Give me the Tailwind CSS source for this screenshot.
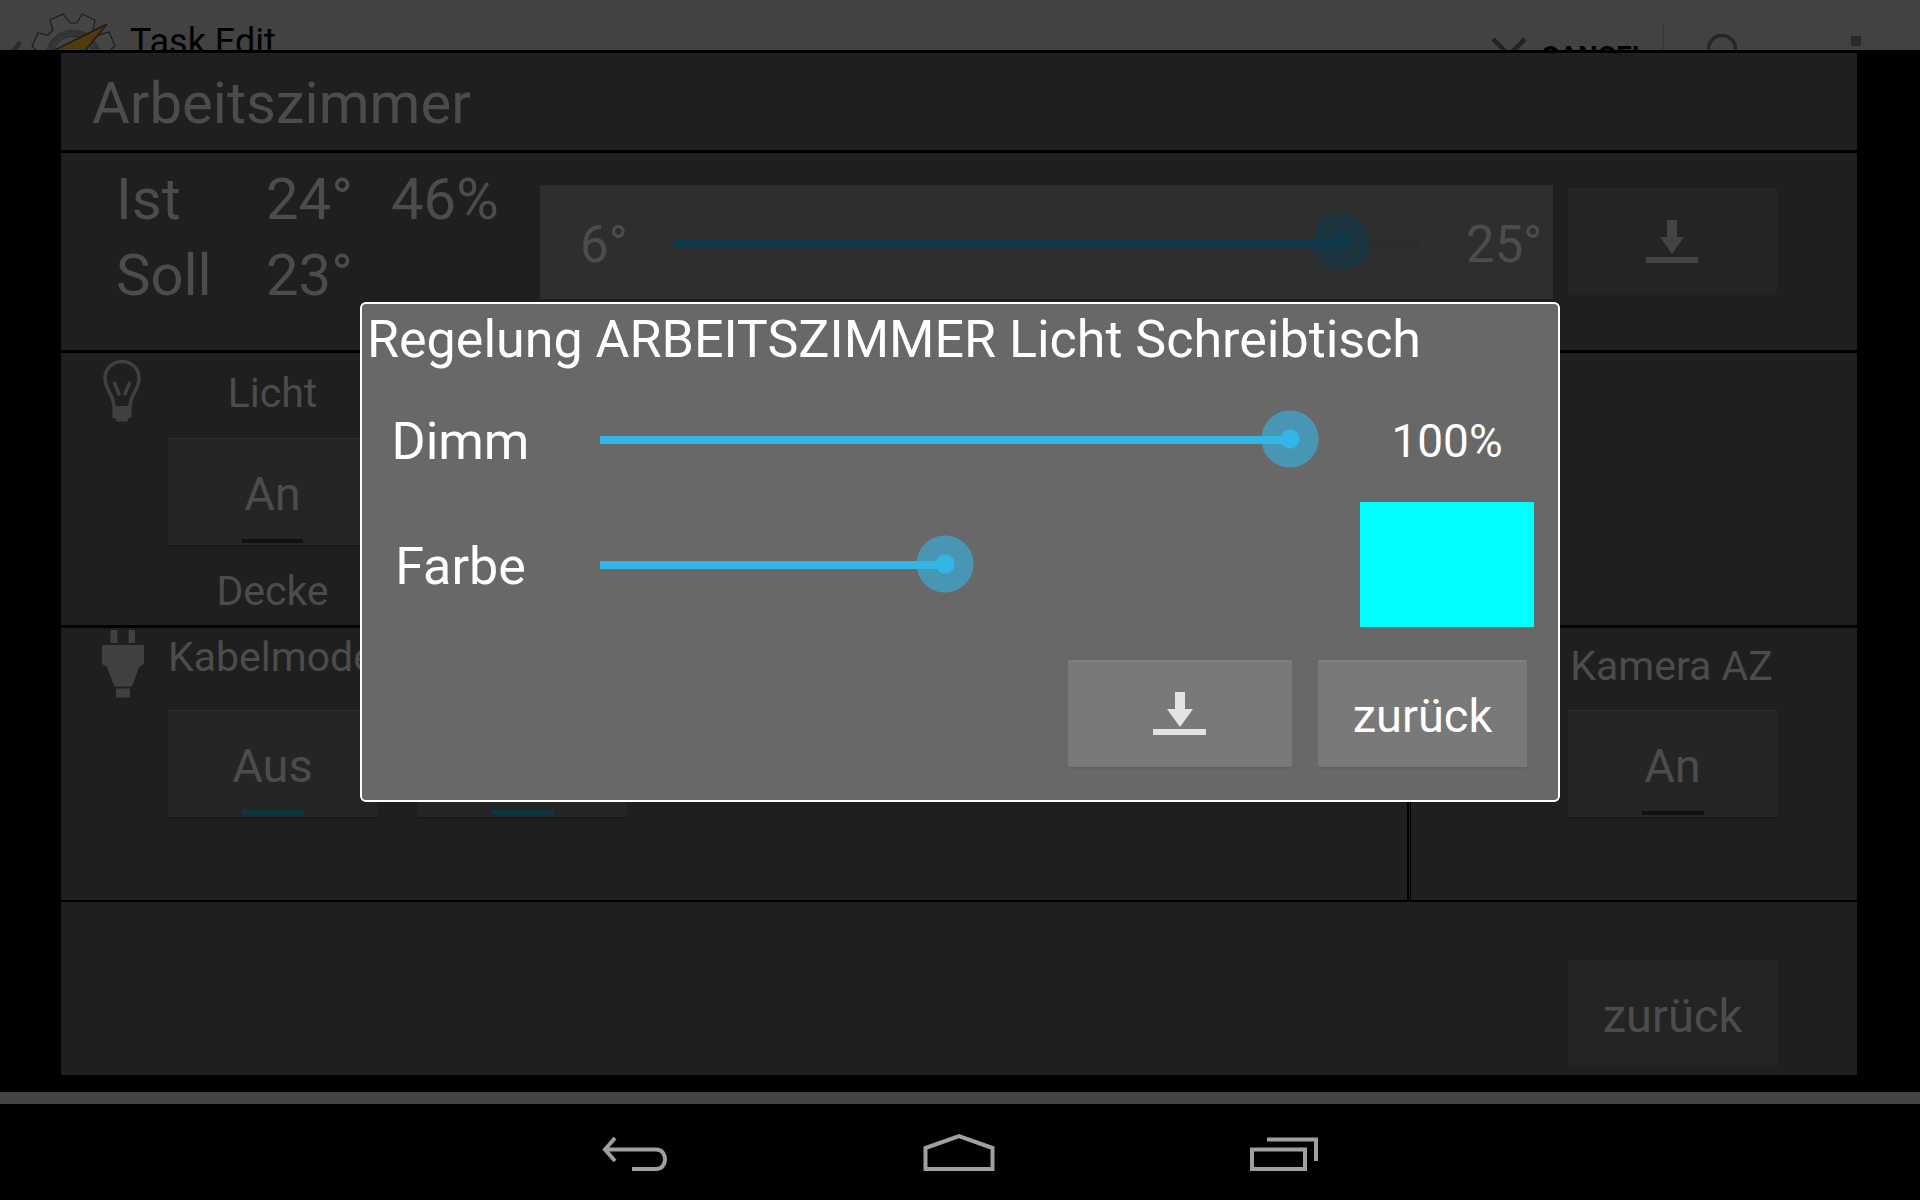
<!DOCTYPE html>
<html lang="de">
<head>
<meta charset="utf-8">
<title>Arbeitszimmer</title>
<script src="https://cdn.jsdelivr.net/npm/@tailwindcss/browser@4"></script>
</head>
<body class="bg-black font-['Roboto','Liberation_Sans',sans-serif] text-[#4c4c4c]">
<div class="relative">

  <!-- Action bar of the app underneath, cut off by the scene -->
  <header class="flex h-[50px] items-start overflow-hidden bg-[#424242] text-black">
    <svg class="h-[50px] w-[130px] shrink-0" viewBox="0 0 130 50" fill="none" aria-hidden="true">
      <path d="M20 42 11 55" stroke="#2c2c2c" stroke-width="5"/>
      <path d="M38 52 32 46 38 33 48 35 53 30 50 20 63 14 70 23H77L82 14 95 20 93 30 99 35 109 32 115 46 108 52Z" fill="#454545" stroke="#1c1c1c" stroke-width="1.2"/>
      <circle cx="73" cy="57" r="25" fill="#434343" stroke="#333" stroke-width="5"/>
      <circle cx="73" cy="57" r="21" stroke="#1c1c1c" stroke-width="1"/>
      <path d="M53 51 107 24 84 52Z" fill="#513a10" stroke="#241b0b" stroke-width="1.5"/>
    </svg>
    <span class="pt-5 text-[36px] leading-[44px] whitespace-nowrap">Task Edit</span>
    <div class="ml-auto flex items-start">
      <button type="button" class="flex items-start text-[28px] font-bold">
        <svg class="mr-[14px] h-[50px] w-[36px]" viewBox="0 0 36 50" fill="none" aria-hidden="true"><path d="M2 39 34 71M34 39 2 71" stroke="#222" stroke-width="4.5"/></svg>
        <span class="pt-[41px] leading-8">CANCEL</span>
      </button>
      <span class="mt-6 ml-[15px] h-[26px] w-[2px] bg-[#393939]"></span>
      <button type="button" aria-label="Suchen" class="ml-[43px]"><svg class="h-[50px] w-[32px]" viewBox="0 0 32 50" fill="none" aria-hidden="true"><circle cx="15" cy="49" r="13.5" stroke="#262626" stroke-width="3.5"/></svg></button>
      <button type="button" aria-label="Mehr" class="mt-9 mr-[59px] ml-[112px] h-[10px] w-[10px] bg-[#2a2a2a]"></button>
    </div>
  </header>

  <!-- Dimmed room scene -->
  <main class="mt-[3px] mr-[63px] mb-[17px] ml-[61px] flex flex-col gap-[3px]">
    <h1 class="bg-[#1f1f1f] pt-1 pl-[31px] text-[58px] leading-[93px]">Arbeitszimmer</h1>

    <section class="flex min-h-[197px] items-start bg-[#1f1f1f] pr-20 pl-[55px]">
      <div class="grid grid-cols-[150px_125px_149px] pt-2 text-[58px] leading-[76px]">
        <span>Ist</span><span>24°</span><span>46%</span>
        <span>Soll</span><span>23°</span>
      </div>
      <div class="mt-8 flex h-[114px] flex-1 items-center bg-[#2e2e2e] pl-10 text-[51px]">
        <label for="temp" class="w-[65px] pt-[6px]">6°</label>
        <input id="temp" type="range" min="6" max="25" value="23" class="h-[58px] min-w-0 flex-1 appearance-none bg-[length:100%_8px] bg-[position:0_26px] bg-no-repeat [&::-webkit-slider-thumb]:h-[58px] [&::-webkit-slider-thumb]:w-[58px] [&::-webkit-slider-thumb]:appearance-none [&::-webkit-slider-thumb]:bg-[radial-gradient(circle,#0f394a_9px,#0f394a99_10px,#0f394a99_28px,transparent_29px)]" style="background-image:linear-gradient(to right,transparent 29px,#0f394a 29px,#0f394a calc(29px + (100% - 58px) * .895),#2c2c2c 0,#2c2c2c calc(100% - 29px),transparent 0)">
        <span class="w-[104px] pt-[6px] pl-[17px]">25°</span>
      </div>
      <button type="button" aria-label="Übernehmen" class="mt-[35px] ml-[15px] flex h-[107px] w-[209px] items-center justify-center rounded-xs border-t-2 border-[#262626] bg-[#242424] pb-[2px]">
        <svg class="h-[48px] w-[56px]" viewBox="0 0 56 48" fill="#444" aria-hidden="true"><path d="M22 2H32V19H39L27 36 15 19H22ZM1 39H53V45H1Z"/></svg>
      </button>
    </section>

    <section class="flex min-h-[272px] items-start bg-[#1f1f1f] pl-[42px]">
      <svg class="mt-[7px] h-[62px] w-[38px]" viewBox="0 0 38 62" fill="none" stroke="#404040" stroke-width="3.500" stroke-linecap="round" aria-hidden="true">
        <path d="M11 46C10 33 2 30 2 18A17 16.500 0 0 1 36 18C36 30 28 33 27 46"/>
        <path d="M11.500 23 16 34M26.500 23 22 34"/>
        <path d="M9.500 46H28.500V58H26L24 61.500H14L12 58H9.500Z" fill="#404040" stroke="none"/>
      </svg>
      <div class="ml-[27px] w-[209px] text-center text-[41px]">
        <div class="pb-1 leading-[81px]">Licht</div>
        <button type="button" class="relative flex h-[109px] w-full items-center justify-center rounded-xs border-t border-b-2 border-t-[#2d2d2d] border-b-[#181818] bg-[#252525] pt-1 text-[47px]">An<span class="absolute bottom-[2px] h-1 w-[61px] bg-[#111]"></span></button>
        <div class="pt-[10px] leading-[68px]">Decke</div>
      </div>
    </section>

    <div class="-mb-px flex min-h-[272px]">
      <section class="flex flex-1 items-start bg-[#1f1f1f] pl-[41px]">
        <svg class="mt-[2px] h-[68px] w-[42px]" viewBox="0 0 42 68" fill="#404040" aria-hidden="true">
          <path d="M8.500 0H15.500V13H8.500ZM26.500 0H33V13H26.500ZM0 15H42V34L37 37 30 56.500H12.500L5 37 0 34ZM14 58.500H28V67.500H14Z"/>
        </svg>
        <div class="ml-6 w-[209px] text-[41px] whitespace-nowrap">
          <div class="pb-6 leading-[58px]">Kabelmodem</div>
          <button type="button" class="relative flex h-[109px] w-full items-center justify-center rounded-xs border-t border-b-2 border-t-[#2d2d2d] border-b-[#181818] bg-[#252525] pt-1 text-[47px]">Aus<span class="absolute bottom-[2px] h-[5px] w-[62px] bg-[#0f3543]"></span></button>
        </div>
        <div class="ml-[41px] w-[209px] pt-[82px]">
          <button type="button" class="relative flex h-[109px] w-full items-center justify-center rounded-xs border-t border-b-2 border-t-[#2d2d2d] border-b-[#181818] bg-[#252525] pt-1 text-[47px]">Aus<span class="absolute bottom-[2px] h-[5px] w-[62px] bg-[#0f3543]"></span></button>
        </div>
      </section>
      <div class="ml-[2px] w-px bg-[#1f1f1f]"></div>
      <section class="ml-px flex w-[446px] items-start justify-end bg-[#1f1f1f] pr-20">
        <div class="w-[209px] text-center text-[41px] whitespace-nowrap">
          <div class="pr-[2px] pb-[6px] leading-[76px]">Kamera AZ</div>
          <button type="button" class="relative flex h-[109px] w-full items-center justify-center rounded-xs border-t border-b-2 border-t-[#2d2d2d] border-b-[#181818] bg-[#252525] pt-1 text-[47px]">An<span class="absolute bottom-[2px] h-1 w-[62px] bg-[#111]"></span></button>
        </div>
      </section>
    </div>

    <section class="flex justify-end bg-[#1f1f1f] pt-[58px] pr-20 pb-2">
      <button type="button" class="h-[107px] w-[209px] rounded-xs border-t-2 border-[#262626] bg-[#242424] pt-1 text-[47px]">zurück</button>
    </section>
  </main>

  <div class="h-3 bg-[#444]"></div>

  <!-- Light control dialog -->
  <div class="absolute inset-0 flex items-center justify-center">
    <div role="dialog" aria-labelledby="dlg" class="w-full max-w-[1200px] rounded-md border-2 border-white bg-[#686868] pb-[33px] text-[52px] text-white">
      <h2 id="dlg" class="pb-[2px] pl-[5px] leading-[71px] whitespace-nowrap">Regelung ARBEITSZIMMER Licht Schreibtisch</h2>
      <div class="flex h-[125px] items-center pr-6">
        <label for="dimm" class="w-[197px] pt-1 text-center">Dimm</label>
        <input id="dimm" type="range" value="100" class="mb-[2px] ml-3 h-[58px] min-w-0 flex-1 appearance-none bg-[length:100%_8px] bg-[position:0_26px] bg-no-repeat [&::-webkit-slider-thumb]:h-[58px] [&::-webkit-slider-thumb]:w-[58px] [&::-webkit-slider-thumb]:appearance-none [&::-webkit-slider-thumb]:bg-[radial-gradient(circle,#33b5e5_9px,#33b5e599_10px,#33b5e599_28px,transparent_29px)]" style="background-image:linear-gradient(to right,transparent 29px,#33b5e5 29px,#33b5e5 calc(100% - 29px),transparent 0)">
        <output for="dimm" class="ml-[41px] w-[174px] pt-1 text-center text-[46px]">100%</output>
      </div>
      <div class="flex h-[125px] items-center pr-6">
        <label for="farbe" class="w-[197px] pt-1 text-center">Farbe</label>
        <input id="farbe" type="range" value="50" class="mb-[2px] ml-3 h-[58px] min-w-0 flex-1 appearance-none bg-[length:100%_8px] bg-[position:0_26px] bg-no-repeat [&::-webkit-slider-thumb]:h-[58px] [&::-webkit-slider-thumb]:w-[58px] [&::-webkit-slider-thumb]:appearance-none [&::-webkit-slider-thumb]:bg-[radial-gradient(circle,#33b5e5_9px,#33b5e599_10px,#33b5e599_28px,transparent_29px)]" style="background-image:linear-gradient(to right,transparent 29px,#33b5e5 29px,#33b5e5 50%,transparent 0)">
        <div class="ml-[41px] h-full w-[174px] bg-[#00ffff]"></div>
      </div>
      <div class="mt-[33px] flex justify-end gap-[26px] pr-[31px] text-[47px]">
        <button type="button" aria-label="Übernehmen" class="flex h-[107px] w-[224px] items-center justify-center rounded-xs border-t-2 border-[#808080] bg-[#797979] pb-[2px] shadow-[0_2px_1px_#636363]">
          <svg class="h-[48px] w-[56px]" viewBox="0 0 56 48" fill="#e3e3e3" aria-hidden="true"><path d="M23 2H33V19H41L28 37 15 19H23ZM1 39H54V45H1Z"/></svg>
        </button>
        <button type="button" class="h-[107px] w-[209px] rounded-xs border-t-2 border-[#808080] bg-[#797979] pt-1 shadow-[0_2px_1px_#636363]">zurück</button>
      </div>
    </div>
  </div>
</div>

<!-- System navigation bar -->
<nav class="flex h-24 items-center justify-center gap-[255px] bg-black pt-[2px]">
  <button type="button" aria-label="Zurück"><svg class="h-10 w-[66px]" viewBox="0 0 66 40" fill="none" stroke="#a0a0a0" stroke-width="4" aria-hidden="true"><path d="M13 5 3 16.500 13 28M3 16.500H54C66 16.500 66 36 54 36H30"/></svg></button>
  <button type="button" aria-label="Startseite"><svg class="h-10 w-[72px]" viewBox="0 0 72 40" fill="none" stroke="#a0a0a0" stroke-width="4" aria-hidden="true"><path d="M2.500 36V15L36 3 69.500 15V36Z"/></svg></button>
  <button type="button" aria-label="Letzte Apps"><svg class="h-10 w-[68px]" viewBox="0 0 68 40" fill="none" stroke="#a0a0a0" stroke-width="4" aria-hidden="true"><path d="M2 16.500H55V36H2ZM17 6.500H66V28"/></svg></button>
</nav>
</body>
</html>
